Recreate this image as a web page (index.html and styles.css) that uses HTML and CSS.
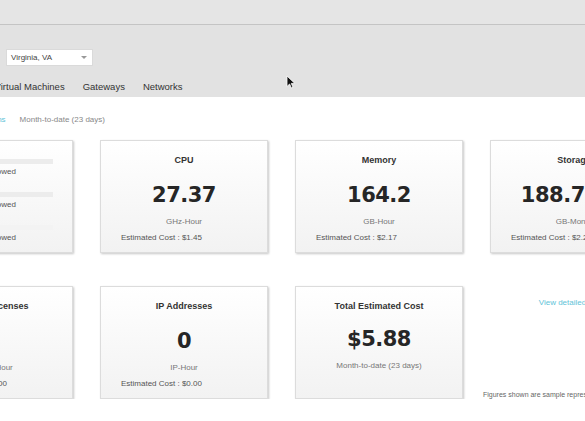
FILE: index.html
```html
<!DOCTYPE html>
<html lang="en">
<head>
    <meta charset="UTF-8">
    <title>Usage Overview</title>
    <link rel="stylesheet" href="styles.css">
</head>
<body>

    <div class="topbar"></div>

    <div class="subheader">
        <div class="page">
            <div class="region">
                <div class="select">
                    <span>Virginia, VA</span>
                    <span class="caret"></span>
                </div>
            </div>
            <nav class="tabs">
                <a>Overview</a>
                <a>Virtual Machines</a>
                <a>Gateways</a>
                <a>Networks</a>
            </nav>
        </div>
        <svg class="cursor" width="10" height="14" viewBox="0 0 10 14">
            <path d="M1 1 L1 11.5 L3.6 9 L5.4 13 L7 12.3 L5.3 8.4 L8.8 8.4 Z" fill="#111" stroke="#fff" stroke-width="0.8"/>
        </svg>
    </div>

    <div class="page content">
        <div class="period">
            <a class="link">Projections</a>
            <span>Month-to-date (23 days)</span>
        </div>

        <div class="grid">
            <div class="card quota">
                <div class="quota-item">
                    <div class="bar"></div>
                    <div class="quota-text">2 of 10 allowed</div>
                </div>
                <div class="quota-item">
                    <div class="bar"></div>
                    <div class="quota-text">1 of 10 allowed</div>
                </div>
                <div class="quota-item">
                    <div class="bar faint"></div>
                    <div class="quota-text">3 of 20 allowed</div>
                </div>
            </div>

            <div class="card">
                <div class="title">CPU</div>
                <div class="value">27.37</div>
                <div class="unit">GHz-Hour</div>
                <div class="cost">Estimated Cost : $1.45</div>
            </div>

            <div class="card">
                <div class="title">Memory</div>
                <div class="value">164.2</div>
                <div class="unit">GB-Hour</div>
                <div class="cost">Estimated Cost : $2.17</div>
            </div>

            <div class="card">
                <div class="title">Storage</div>
                <div class="value">188.7513</div>
                <div class="unit">GB-Month</div>
                <div class="cost">Estimated Cost : $2.26</div>
            </div>

            <div class="card">
                <div class="title">Software Licenses</div>
                <div class="value">0</div>
                <div class="unit">License-Hour</div>
                <div class="cost">Estimated Cost : $0.00</div>
            </div>

            <div class="card">
                <div class="title">IP Addresses</div>
                <div class="value">0</div>
                <div class="unit">IP-Hour</div>
                <div class="cost">Estimated Cost : $0.00</div>
            </div>

            <div class="card total">
                <div class="title">Total Estimated Cost</div>
                <div class="value">$5.88</div>
                <div class="unit">Month-to-date (23 days)</div>
            </div>

            <div class="info">
                <a class="link">View detailed report</a>
                <div class="note">Figures shown are sample representations only.</div>
            </div>
        </div>
    </div>

</body>
</html>
```

FILE: styles.css
```css
body {
    margin: 0;
    overflow: hidden;
    background: #fff;
    font-family: 'Liberation Sans', Arial, sans-serif;
    color: #333;
}
.page {
    margin-left: -95px;
}
.topbar {
    height: 24px;
    background: #e5e5e5;
    border-bottom: 1px solid #c4c4c4;
}
.subheader {
    position: relative;
    height: 72px;
    padding-top: 24px;
    box-sizing: border-box;
    background: #e2e2e2;
}
.region {
    padding-left: 101px;
}
.select {
    display: flex;
    align-items: center;
    justify-content: space-between;
    width: 87px;
    height: 17px;
    padding: 0 5px 0 4px;
    box-sizing: border-box;
    background: #fff;
    border: 1px solid #dadada;
    font-size: 8px;
    color: #444;
}
.caret {
    width: 0;
    height: 0;
    border-left: 3px solid transparent;
    border-right: 3px solid transparent;
    border-top: 3px solid #999;
}
.tabs {
    display: flex;
    gap: 18px;
    margin-top: 15px;
    padding-left: 32px;
    font-size: 9.5px;
    line-height: 12px;
    color: #333;
}
.cursor {
    position: absolute;
    left: 286px;
    top: 50px;
}
.period {
    display: flex;
    gap: 14px;
    margin-top: 17px;
    padding-left: 61px;
    font-size: 8px;
    line-height: 12px;
    color: #888;
}
.link {
    color: #62c3d8;
}
.grid {
    display: grid;
    grid-template-columns: repeat(4, 168px);
    gap: 33px 27px;
    margin-top: 14px;
}
.card {
    height: 113px;
    padding-top: 13px;
    box-sizing: border-box;
    text-align: center;
    background: linear-gradient(#ffffff, #f2f2f2);
    border: 1px solid #dcdcdc;
    box-shadow: 1px 1px 2px rgba(0,0,0,0.22);
}
.title {
    font-size: 9px;
    line-height: 12px;
    font-weight: bold;
    color: #333;
}
.value {
    margin-top: 16px;
    font-family: 'DejaVu Sans', Verdana, sans-serif;
    font-size: 21px;
    line-height: 26px;
    font-weight: bold;
    letter-spacing: -0.5px;
    color: #262626;
    white-space: nowrap;
}
.unit {
    margin-top: 8px;
    font-size: 8px;
    line-height: 12px;
    color: #777;
}
.cost {
    margin-top: 4px;
    padding-left: 20px;
    font-size: 8px;
    line-height: 12px;
    text-align: left;
    color: #555;
    white-space: nowrap;
}
.total .value {
    margin-top: 14px;
}
.quota {
    padding: 18px 19px 0 19px;
}
.quota-item {
    height: 33px;
}
.bar {
    height: 5px;
    background: #ececec;
}
.bar.faint {
    background: #f3f3f3;
}
.quota-text {
    margin-top: 2px;
    font-size: 8px;
    line-height: 12px;
    color: #555;
}
.info {
    display: flex;
    flex-direction: column;
    justify-content: space-between;
    align-items: center;
    padding: 12px 0 1px;
    font-size: 8px;
    white-space: nowrap;
}
.note {
    margin-left: -7px;
    font-size: 7px;
    color: #666;
    align-self: flex-start;
}
```
